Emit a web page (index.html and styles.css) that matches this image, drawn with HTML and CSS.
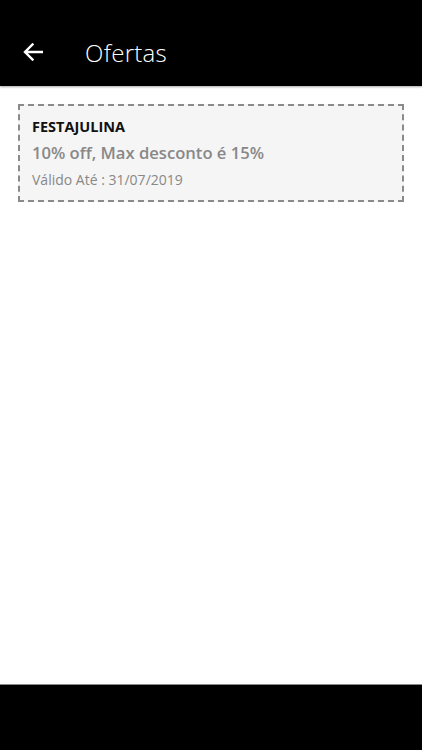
FILE: index.html
```html
<!DOCTYPE html>
<html lang="pt">
<head>
<meta charset="utf-8">
<link rel="stylesheet" href="styles.css">
</head>
<body>
<div class="app">
  <header class="topbar">
    <svg class="back" width="20" height="18" viewBox="0 0 20 18" aria-hidden="true">
      <path d="M19 9H2.5M9.5 1.5L2 9l7.5 7.5" fill="none" stroke="#fff" stroke-width="2.4" stroke-linecap="square"/>
    </svg>
    <h1 class="title">Ofertas</h1>
  </header>
  <main class="content">
    <div class="coupon">
      <div class="code">FESTAJULINA</div>
      <div class="desc">10% off, Max desconto é 15%</div>
      <div class="valid">Válido Até : 31/07/2019</div>
    </div>
  </main>
  <footer class="navbar"></footer>
</div>
</body>
</html>
```

FILE: styles.css
```css
html, body {
  margin: 0;
  padding: 0;
  background: #fff;
}
body {
  font-family: "Open Sans", "Noto Sans", sans-serif;
}
.app {
  width: 422px;
  height: 750px;
  display: flex;
  flex-direction: column;
}
.topbar {
  height: 86px;
  background: #000;
  display: flex;
  align-items: center;
  padding-left: 23px;
  padding-top: 18px;
  box-sizing: border-box;
  box-shadow: 0 1px 2px rgba(0,0,0,0.35);
}
.back {
  display: block;
}
.title {
  margin: 0 0 0 42px;
  color: #fff;
  font-weight: 300;
  font-size: 24px;
  letter-spacing: 0.3px;
}
.content {
  flex: 1;
  padding: 18px 18px 0 18px;
}
.coupon {
  border: 2px dashed #8a8a8a;
  background: #f5f5f5;
  padding: 10px 12px 10px 12px;
  height: 98px;
  box-sizing: border-box;
}
.code {
  font-weight: 700;
  font-size: 14.5px;
  color: #111;
  line-height: 22px;
}
.desc {
  font-size: 16.6px;
  color: #888;
  line-height: 28px;
  font-weight: 600;
  margin-top: 1px;
}
.valid {
  font-size: 14px;
  color: #888;
  line-height: 26px;
}
.navbar {
  height: 65px;
  background: #000;
  border-top: 1px solid #888;
}
```
